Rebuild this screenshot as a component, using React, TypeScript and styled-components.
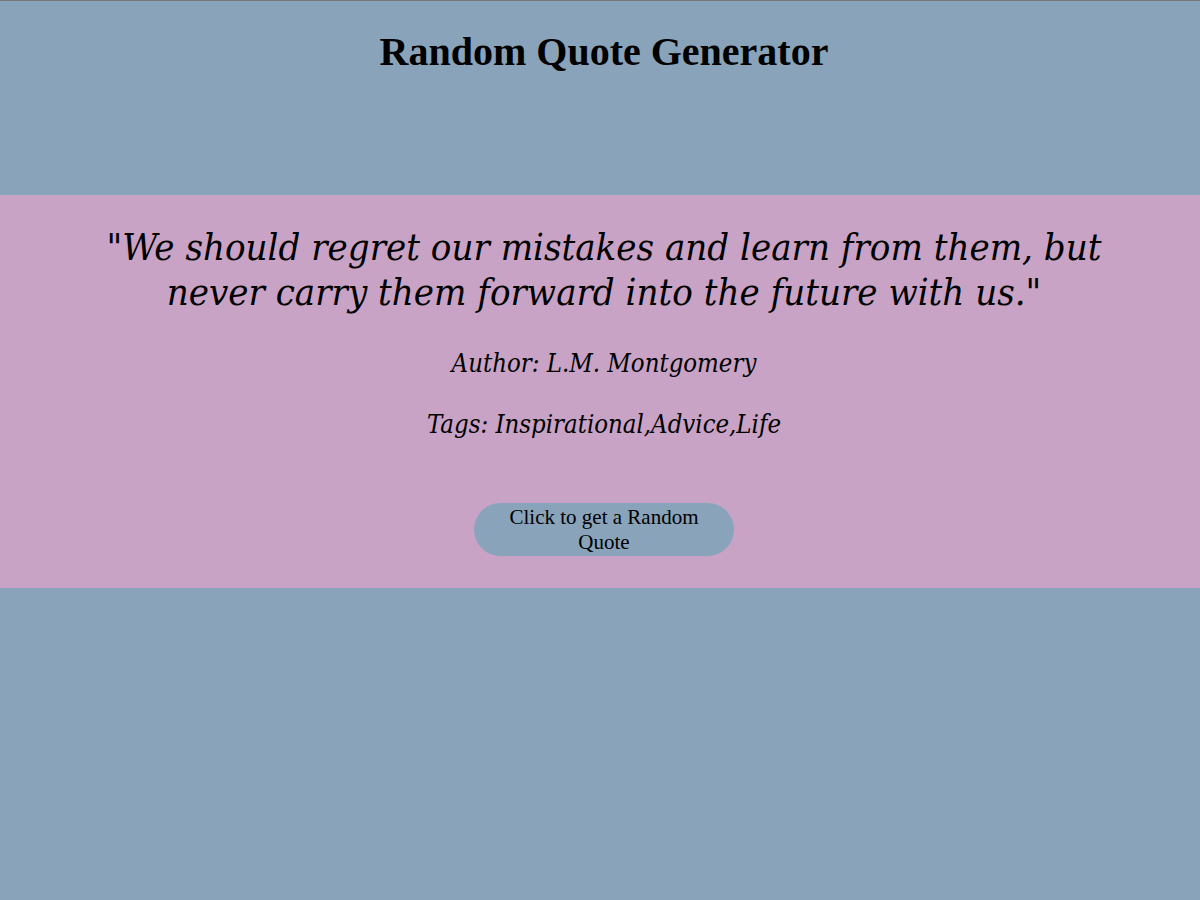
import React from "react";
import styled, { createGlobalStyle } from "styled-components";

const Global = createGlobalStyle`
  html, body { margin: 0; padding: 0; }
  body {
    background: #88a3ba;
    min-height: 900px;
    border-top: 1px solid #777777;
    box-sizing: border-box;
    font-family: "Liberation Serif", "Times New Roman", serif;
    color: #000;
  }
`;

const Page = styled.div`
  display: flex;
  flex-direction: column;
  align-items: stretch;
  padding-left: 8px;
`;

const Title = styled.h1`
  margin: 0;
  padding: 28px 0 0;
  height: 194px;
  box-sizing: border-box;
  text-align: center;
  font-family: "Liberation Serif", serif;
  font-weight: bold;
  font-size: 40px;
  line-height: 46px;
`;

const Band = styled.section`
  background: #c8a3c5;
  margin-left: -8px;
  padding-left: 8px;
  height: 393px;
  box-sizing: border-box;
  padding-top: 30px;
  display: flex;
  flex-direction: column;
  align-items: center;
`;

const Quote = styled.p`
  margin: 0;
  max-width: 1010px;
  text-align: center;
  font-family: "DejaVu Serif", serif;
  font-stretch: condensed;
  font-style: italic;
  font-size: 38px;
  line-height: 45px;
`;

const Meta = styled.p<{ $top: number }>`
  margin: ${(p) => p.$top}px 0 0;
  text-align: center;
  font-family: "DejaVu Serif", serif;
  font-stretch: condensed;
  font-style: italic;
  font-size: 25.5px;
  line-height: 30px;
`;

const Button = styled.button`
  margin-top: 64px;
  width: 260px;
  height: 53px;
  border: none;
  border-radius: 27px;
  background: #88a3ba;
  font-family: "Liberation Serif", serif;
  font-size: 21px;
  line-height: 25px;
  color: #000;
  padding: 0 20px;
`;

export default function App() {
  return (
    <Page>
      <Global />
      <Title>Random Quote Generator</Title>
      <Band>
        <Quote>
          "We should regret our mistakes and learn from them, but never carry them forward into the future with us."
        </Quote>
        <Meta $top={33}>Author: L.M. Montgomery</Meta>
        <Meta $top={31}>Tags: Inspirational,Advice,Life</Meta>
        <Button>Click to get a Random Quote</Button>
      </Band>
    </Page>
  );
}
